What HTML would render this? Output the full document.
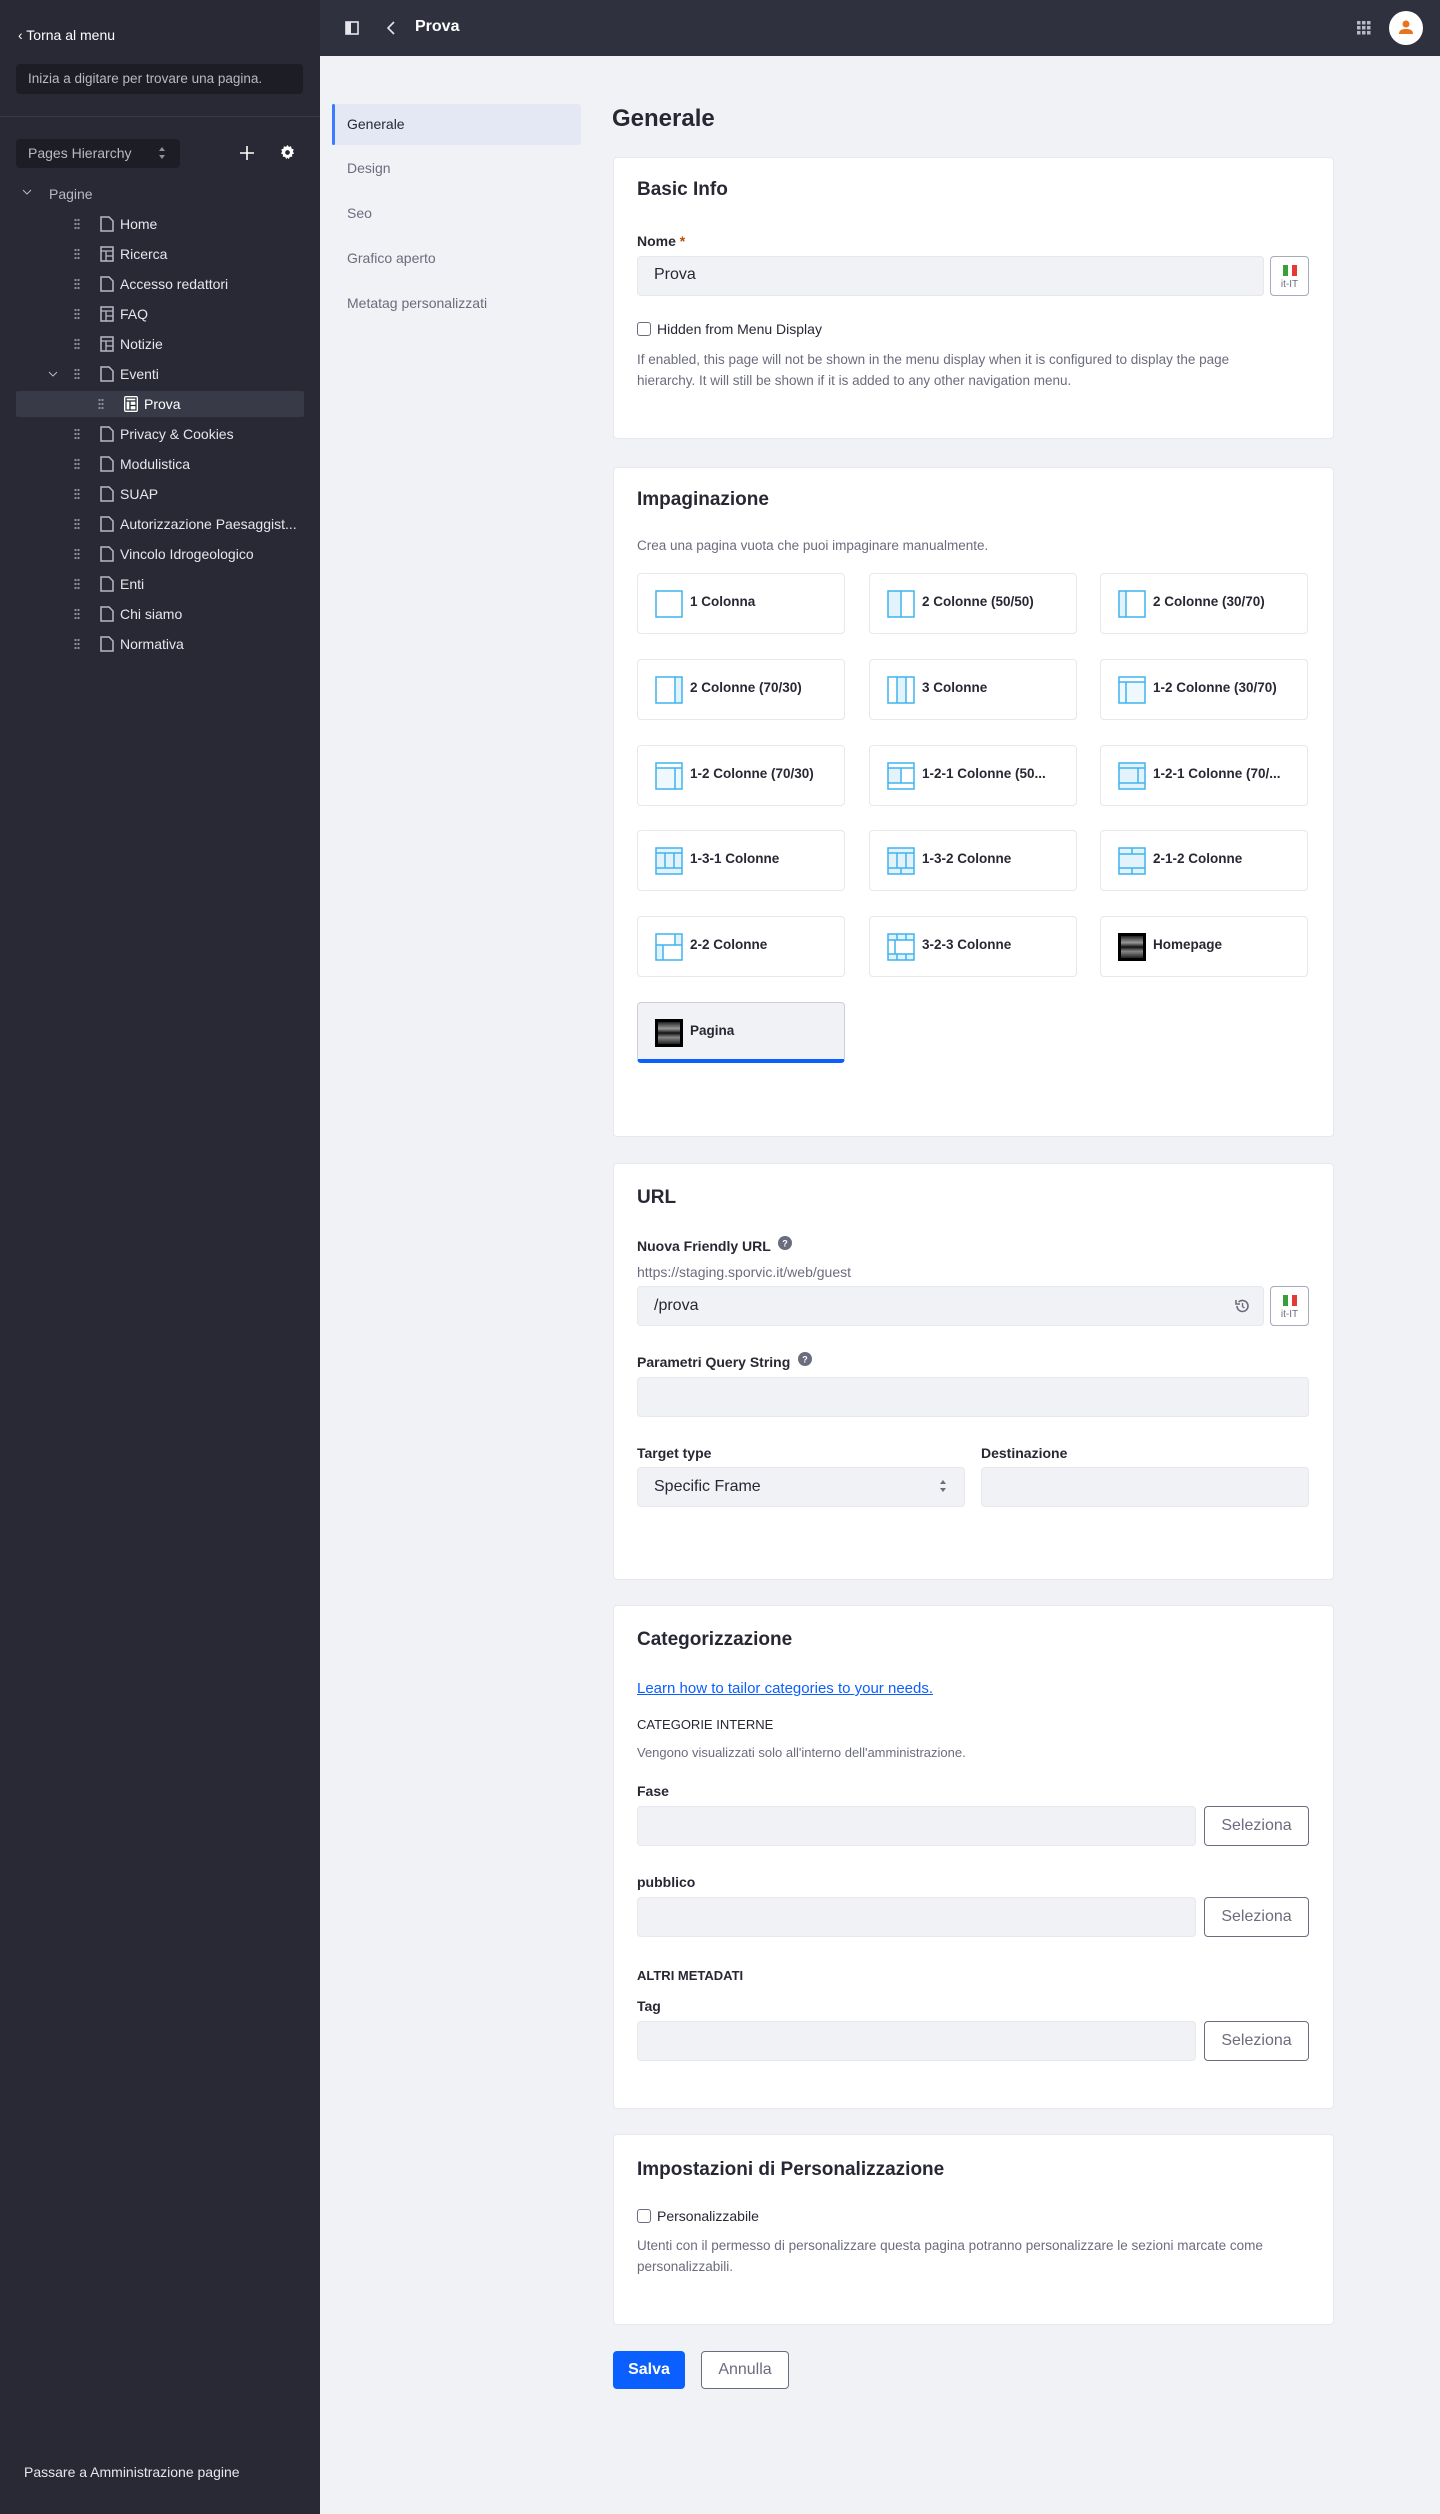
<!DOCTYPE html>
<html><head><meta charset="utf-8">
<style>
*{box-sizing:border-box;margin:0;padding:0}
body{width:1440px;height:2514px;position:relative;background:#f1f2f5;font-family:"Liberation Sans",sans-serif;font-size:14px;color:#272833;overflow:hidden}
.a{position:absolute}
.side{left:0;top:0;width:320px;height:2514px;background:#282934}
.top{left:320px;top:0;width:1120px;height:56px;background:#30313f}
.t{position:absolute;line-height:20px;white-space:nowrap}
.card{position:absolute;left:613px;width:721px;background:#fff;border:1px solid #e7e7ed;border-radius:4px}
.h{font-size:19px;font-weight:bold;color:#272833}
.lbl{font-weight:bold;font-size:14px;color:#272833}
.help{color:#6b6c7e;font-size:14px}
.inp{position:absolute;background:#f1f2f5;border:1px solid #e7e7ed;border-radius:4px;height:40px}
.flag{position:absolute;width:39px;height:40px;border:1px solid #a7a9bc;border-radius:4px;background:#fff;font-size:10px;color:#6b6c7e;text-align:center}
.tile{position:absolute;width:208px;height:61px;border:1px solid #e7e7ed;border-radius:4px;background:#fff}
.tile svg{position:absolute;left:17px;top:16px}
.tile span{position:absolute;left:52px;top:20px;font-weight:bold;font-size:13.5px;color:#272833;white-space:nowrap}
.btn2{position:absolute;width:105px;height:40px;border:1px solid #6b6c7e;border-radius:4px;background:#fff;color:#6b6c7e;font-size:16px;text-align:center;line-height:38px}
.nav{position:absolute;left:347px;color:#6b6c7e;font-size:14px;line-height:20px}
.cb{display:inline-block;width:14px;height:14px;border:1px solid #6b6c7e;border-radius:3px;vertical-align:-2px;margin-right:6px;background:#fff}
.it{position:absolute;height:20px}
.it .d{position:absolute;left:0;top:4px;width:6px;height:12px;background-image:radial-gradient(circle,#8e8f9e 1px,transparent 1.3px);background-size:3px 4px}
.it .ic{position:absolute;left:26px;top:2px}
.it .tx{position:absolute;left:46px;top:0;line-height:20px;color:#e6e6ec;white-space:nowrap;font-size:14px}
</style></head><body>
<div class="a side"></div>
<div class="t" style="left:18px;top:25px;color:#fff;font-size:14px">&#8249; Torna al menu</div>
<div class="a" style="left:16px;top:64px;width:287px;height:30px;background:#1c1d25;border-radius:4px"></div>
<div class="t" style="left:28px;top:69px;color:#b8b9c6;font-size:13.5px">Inizia a digitare per trovare una pagina.</div>
<div class="a" style="left:0;top:116px;width:320px;height:1px;background:#393a48"></div>
<div class="a" style="left:16px;top:139px;width:164px;height:29px;background:#1c1d25;border-radius:4px"></div>
<div class="t" style="left:28px;top:143px;color:#b8b9c6;font-size:14px">Pages Hierarchy</div>
<svg class="a" style="left:158px;top:146px" width="8" height="14"><path d="M4 1L7 5H1zM4 13L7 9H1z" fill="#8e8f9e"/></svg>
<svg class="a" style="left:240px;top:146px" width="14" height="14"><path d="M7 0v14M0 7h14" stroke="#fff" stroke-width="1.6"/></svg>
<svg class="a" style="left:280px;top:145px" width="15" height="15" viewBox="0 0 16 16"><path d="M8 0l1.5 2 2.4-.7.4 2.5 2.4 1-1 2.2L15 9l-2.2 1 .2 2.5-2.5.1L9.3 15 8 13.5 6.7 15l-1.2-2.4-2.5-.1.2-2.5L1 9l1.3-2-1-2.2 2.4-1 .4-2.5L6.5 2z" fill="#fff"/><circle cx="8" cy="8" r="2.5" fill="#282934"/></svg>
<svg class="a" style="left:22px;top:189px" width="10" height="8"><path d="M1 1l4 4 4-4" stroke="#b8b9c6" fill="none"/></svg>
<div class="t" style="left:49px;top:184px;color:#b8b9c6">Pagine</div>

<div class="a" style="left:16px;top:391px;width:288px;height:26px;background:#393a48;border-radius:2px"></div>
<svg class="a" style="left:48px;top:371px" width="10" height="8"><path d="M1 1l4 4 4-4" stroke="#b8b9c6" fill="none"/></svg>

<div class="a top"></div>
<svg class="a" style="left:345px;top:21px" width="14" height="14"><rect x="1" y="1" width="12" height="12" fill="none" stroke="#e6e6ec" stroke-width="1.6"/><rect x="1" y="1" width="5" height="12" fill="#e6e6ec"/></svg>
<svg class="a" style="left:387px;top:21px" width="8" height="14"><path d="M7 1L1 7l6 6" stroke="#e6e6ec" stroke-width="1.6" fill="none"/></svg>
<div class="t" style="left:415px;top:17px;color:#fff;font-size:16px;font-weight:bold">Prova</div>
<svg class="a" style="left:1357px;top:21px" width="14" height="14"><g fill="#b8b9c6"><rect x="0" y="0" width="3.5" height="3.5"/><rect x="5" y="0" width="3.5" height="3.5"/><rect x="10" y="0" width="3.5" height="3.5"/><rect x="0" y="5" width="3.5" height="3.5"/><rect x="5" y="5" width="3.5" height="3.5"/><rect x="10" y="5" width="3.5" height="3.5"/><rect x="0" y="10" width="3.5" height="3.5"/><rect x="5" y="10" width="3.5" height="3.5"/><rect x="10" y="10" width="3.5" height="3.5"/></g></svg>
<svg class="a" style="left:1389px;top:11px" width="34" height="34"><circle cx="17" cy="17" r="17" fill="#fff"/><circle cx="17" cy="13" r="3.5" fill="#e8731e"/><path d="M10 23c0-4 3-5 7-5s7 1 7 5z" fill="#e8731e"/></svg>

<div class="a" style="left:332px;top:104px;width:249px;height:41px;background:#e3e8f4;border-radius:3px"></div>
<div class="a" style="left:332px;top:104px;width:3px;height:41px;background:#3a7bff;border-radius:2px"></div>
<div class="nav" style="top:114px;color:#272833">Generale</div>
<div class="nav" style="top:158px">Design</div>
<div class="nav" style="top:203px">Seo</div>
<div class="nav" style="top:248px">Grafico aperto</div>
<div class="nav" style="top:293px">Metatag personalizzati</div>

<div class="t" style="left:612px;top:105px;font-size:24px;font-weight:bold;line-height:28px">Generale</div>

<div class="card" style="top:157px;height:282px"></div>
<div class="t h" style="left:637px;top:180px">Basic Info</div>
<div class="t lbl" style="left:637px;top:231px">Nome <span style="color:#b95000">*</span></div>
<div class="inp" style="left:637px;top:256px;width:627px"></div>
<div class="t" style="left:654px;top:265px;font-size:16px">Prova</div>
<div class="flag" style="left:1270px;top:256px"><svg style="margin-top:8px" width="14" height="11"><rect width="5" height="11" fill="#3a9e3a"/><rect x="5" width="4" height="11" fill="#fff"/><rect x="9" width="5" height="11" fill="#e53935"/></svg><div style="line-height:11px">it-IT</div></div>
<div class="t" style="left:637px;top:319px;font-size:14px"><span class="cb"></span>Hidden from Menu Display</div>
<div class="t help" style="left:637px;top:349px;line-height:21px;white-space:normal;width:650px;font-size:13.5px">If enabled, this page will not be shown in the menu display when it is configured to display the page hierarchy. It will still be shown if it is added to any other navigation menu.</div>

<div class="card" style="top:467px;height:670px"></div>
<div class="t h" style="left:637px;top:490px">Impaginazione</div>
<div class="t help" style="left:637px;top:536px;font-size:13.5px">Crea una pagina vuota che puoi impaginare manualmente.</div>

<div class="card" style="top:1163px;height:417px"></div>
<div class="t h" style="left:637px;top:1188px">URL</div>
<div class="t lbl" style="left:637px;top:1236px">Nuova Friendly URL <svg width="14" height="14" style="vertical-align:1px;margin-left:4px"><circle cx="7" cy="7" r="7" fill="#6b6c7e"/><text x="7" y="10.5" font-size="9" fill="#fff" text-anchor="middle" font-family="Liberation Sans">?</text></svg></div>
<div class="t help" style="left:637px;top:1262px">https://staging.sporvic.it/web/guest</div>
<div class="inp" style="left:637px;top:1286px;width:627px"></div>
<div class="t" style="left:654px;top:1296px;font-size:16px">/prova</div>
<svg class="a" style="left:1234px;top:1298px" width="16" height="16"><path d="M3 8a5.5 5.5 0 1 0 1.6-3.9" stroke="#6b6c7e" stroke-width="1.6" fill="none"/><path d="M2 2v4h4" stroke="#6b6c7e" stroke-width="1.6" fill="none"/><path d="M8.5 5v3.5l2 1.5" stroke="#6b6c7e" stroke-width="1.4" fill="none"/></svg>
<div class="flag" style="left:1270px;top:1286px"><svg style="margin-top:8px" width="14" height="11"><rect width="5" height="11" fill="#3a9e3a"/><rect x="5" width="4" height="11" fill="#fff"/><rect x="9" width="5" height="11" fill="#e53935"/></svg><div style="line-height:11px">it-IT</div></div>
<div class="t lbl" style="left:637px;top:1352px">Parametri Query String <svg width="14" height="14" style="vertical-align:1px;margin-left:4px"><circle cx="7" cy="7" r="7" fill="#6b6c7e"/><text x="7" y="10.5" font-size="9" fill="#fff" text-anchor="middle" font-family="Liberation Sans">?</text></svg></div>
<div class="inp" style="left:637px;top:1377px;width:672px"></div>
<div class="t lbl" style="left:637px;top:1443px">Target type</div>
<div class="t lbl" style="left:981px;top:1443px">Destinazione</div>
<div class="inp" style="left:637px;top:1467px;width:328px"></div>
<div class="t" style="left:654px;top:1477px;font-size:16px">Specific Frame</div>
<svg class="a" style="left:939px;top:1479px" width="8" height="14"><path d="M4 1L7 5H1zM4 13L7 9H1z" fill="#6b6c7e"/></svg>
<div class="inp" style="left:981px;top:1467px;width:328px"></div>

<div class="card" style="top:1605px;height:504px"></div>
<div class="t h" style="left:637px;top:1630px">Categorizzazione</div>
<div class="t" style="left:637px;top:1679px;color:#0b5fff;font-size:15px;text-decoration:underline">Learn how to tailor categories to your needs.</div>
<div class="t" style="left:637px;top:1715px;font-size:13px">CATEGORIE INTERNE</div>
<div class="t help" style="left:637px;top:1743px;font-size:13px">Vengono visualizzati solo all'interno dell'amministrazione.</div>
<div class="t lbl" style="left:637px;top:1781px">Fase</div>
<div class="inp" style="left:637px;top:1806px;width:559px"></div>
<div class="btn2" style="left:1204px;top:1806px">Seleziona</div>
<div class="t lbl" style="left:637px;top:1872px">pubblico</div>
<div class="inp" style="left:637px;top:1897px;width:559px"></div>
<div class="btn2" style="left:1204px;top:1897px">Seleziona</div>
<div class="t" style="left:637px;top:1966px;font-size:13px;font-weight:bold">ALTRI METADATI</div>
<div class="t lbl" style="left:637px;top:1996px">Tag</div>
<div class="inp" style="left:637px;top:2021px;width:559px"></div>
<div class="btn2" style="left:1204px;top:2021px">Seleziona</div>

<div class="card" style="top:2134px;height:191px"></div>
<div class="t h" style="left:637px;top:2160px">Impostazioni di Personalizzazione</div>
<div class="t" style="left:637px;top:2206px"><span class="cb"></span>Personalizzabile</div>
<div class="t help" style="left:637px;top:2235px;line-height:21px;white-space:normal;width:680px;font-size:13.5px">Utenti con il permesso di personalizzare questa pagina potranno personalizzare le sezioni marcate come personalizzabili.</div>

<div class="a" style="left:613px;top:2351px;width:72px;height:38px;background:#0b5fff;border-radius:4px;color:#fff;font-weight:bold;font-size:16px;text-align:center;line-height:38px">Salva</div>
<div class="a" style="left:701px;top:2351px;width:88px;height:38px;border:1px solid #6b6c7e;border-radius:4px;background:#fff;color:#6b6c7e;font-size:16px;text-align:center;line-height:36px">Annulla</div>

<div class="t" style="left:24px;top:2462px;color:#e6e6ec;font-size:14px">Passare a Amministrazione pagine</div>

<div class="it" style="left:74px;top:214px"><i class="d"></i><svg class="ic" width="14" height="16"><path d="M1 1h8l4 4v10H1z" fill="none" stroke="#b8b9c6" stroke-width="1.5"/></svg><span class="tx">Home</span></div>
<div class="it" style="left:74px;top:244px"><i class="d"></i><svg class="ic" width="14" height="16"><rect x="1" y="1" width="12" height="14" fill="none" stroke="#b8b9c6" stroke-width="1.5"/><path d="M1 5h12M6 5v10M6 10h7" stroke="#b8b9c6" stroke-width="1.3"/></svg><span class="tx">Ricerca</span></div>
<div class="it" style="left:74px;top:274px"><i class="d"></i><svg class="ic" width="14" height="16"><path d="M1 1h8l4 4v10H1z" fill="none" stroke="#b8b9c6" stroke-width="1.5"/></svg><span class="tx">Accesso redattori</span></div>
<div class="it" style="left:74px;top:304px"><i class="d"></i><svg class="ic" width="14" height="16"><rect x="1" y="1" width="12" height="14" fill="none" stroke="#b8b9c6" stroke-width="1.5"/><path d="M1 5h12M6 5v10M6 10h7" stroke="#b8b9c6" stroke-width="1.3"/></svg><span class="tx">FAQ</span></div>
<div class="it" style="left:74px;top:334px"><i class="d"></i><svg class="ic" width="14" height="16"><rect x="1" y="1" width="12" height="14" fill="none" stroke="#b8b9c6" stroke-width="1.5"/><path d="M1 5h12M6 5v10M6 10h7" stroke="#b8b9c6" stroke-width="1.3"/></svg><span class="tx">Notizie</span></div>
<div class="it" style="left:74px;top:364px"><i class="d"></i><svg class="ic" width="14" height="16"><path d="M1 1h8l4 4v10H1z" fill="none" stroke="#b8b9c6" stroke-width="1.5"/></svg><span class="tx">Eventi</span></div>
<div class="it" style="left:98px;top:394px"><i class="d"></i><svg class="ic" width="14" height="16"><rect x="0" y="0" width="14" height="16" rx="2" fill="#fff"/><path d="M2 5h10M6 5v9M6 9.5h6" stroke="#282934" stroke-width="1.3"/><rect x="2" y="2" width="10" height="12" fill="none" stroke="#282934" stroke-width="1.2"/></svg><span class="tx" style="color:#fff">Prova</span></div>
<div class="it" style="left:74px;top:424px"><i class="d"></i><svg class="ic" width="14" height="16"><path d="M1 1h8l4 4v10H1z" fill="none" stroke="#b8b9c6" stroke-width="1.5"/></svg><span class="tx">Privacy &amp; Cookies</span></div>
<div class="it" style="left:74px;top:454px"><i class="d"></i><svg class="ic" width="14" height="16"><path d="M1 1h8l4 4v10H1z" fill="none" stroke="#b8b9c6" stroke-width="1.5"/></svg><span class="tx">Modulistica</span></div>
<div class="it" style="left:74px;top:484px"><i class="d"></i><svg class="ic" width="14" height="16"><path d="M1 1h8l4 4v10H1z" fill="none" stroke="#b8b9c6" stroke-width="1.5"/></svg><span class="tx">SUAP</span></div>
<div class="it" style="left:74px;top:514px"><i class="d"></i><svg class="ic" width="14" height="16"><path d="M1 1h8l4 4v10H1z" fill="none" stroke="#b8b9c6" stroke-width="1.5"/></svg><span class="tx">Autorizzazione Paesaggist...</span></div>
<div class="it" style="left:74px;top:544px"><i class="d"></i><svg class="ic" width="14" height="16"><path d="M1 1h8l4 4v10H1z" fill="none" stroke="#b8b9c6" stroke-width="1.5"/></svg><span class="tx">Vincolo Idrogeologico</span></div>
<div class="it" style="left:74px;top:574px"><i class="d"></i><svg class="ic" width="14" height="16"><path d="M1 1h8l4 4v10H1z" fill="none" stroke="#b8b9c6" stroke-width="1.5"/></svg><span class="tx">Enti</span></div>
<div class="it" style="left:74px;top:604px"><i class="d"></i><svg class="ic" width="14" height="16"><path d="M1 1h8l4 4v10H1z" fill="none" stroke="#b8b9c6" stroke-width="1.5"/></svg><span class="tx">Chi siamo</span></div>
<div class="it" style="left:74px;top:634px"><i class="d"></i><svg class="ic" width="14" height="16"><path d="M1 1h8l4 4v10H1z" fill="none" stroke="#b8b9c6" stroke-width="1.5"/></svg><span class="tx">Normativa</span></div>

<div class="tile" style="left:637px;top:573px"><svg width="28" height="28"><rect x="1" y="1" width="26" height="26" fill="#fff" stroke="#3fb3ef" stroke-width="1.5"/></svg><span>1 Colonna</span></div>
<div class="tile" style="left:869px;top:573px"><svg width="28" height="28"><rect x="1" y="1" width="13" height="26" fill="#e3f3fc"/><rect x="1" y="1" width="26" height="26" fill="none" stroke="#3fb3ef" stroke-width="1.5"/><path d="M14 1v26" stroke="#3fb3ef" stroke-width="1.5"/></svg><span>2 Colonne (50/50)</span></div>
<div class="tile" style="left:1100px;top:573px"><svg width="28" height="28"><rect x="1" y="1" width="7" height="26" fill="#e3f3fc"/><rect x="1" y="1" width="26" height="26" fill="none" stroke="#3fb3ef" stroke-width="1.5"/><path d="M8 1v26" stroke="#3fb3ef" stroke-width="1.5"/></svg><span>2 Colonne (30/70)</span></div>

<div class="tile" style="left:637px;top:659px"><svg width="28" height="28"><rect x="20" y="1" width="7" height="26" fill="#e3f3fc"/><rect x="1" y="1" width="26" height="26" fill="none" stroke="#3fb3ef" stroke-width="1.5"/><path d="M20 1v26" stroke="#3fb3ef" stroke-width="1.5"/></svg><span>2 Colonne (70/30)</span></div>
<div class="tile" style="left:869px;top:659px"><svg width="28" height="28"><rect x="10" y="1" width="9" height="26" fill="#e3f3fc"/><rect x="1" y="1" width="26" height="26" fill="none" stroke="#3fb3ef" stroke-width="1.5"/><path d="M10 1v26M19 1v26" stroke="#3fb3ef" stroke-width="1.5"/></svg><span>3 Colonne</span></div>
<div class="tile" style="left:1100px;top:659px"><svg width="28" height="28"><rect x="1" y="6" width="26" height="21" fill="#eef8fd"/><rect x="1" y="1" width="26" height="26" fill="none" stroke="#3fb3ef" stroke-width="1.5"/><path d="M1 6h26M8 6v21" stroke="#3fb3ef" stroke-width="1.5"/></svg><span>1-2 Colonne (30/70)</span></div>

<div class="tile" style="left:637px;top:745px"><svg width="28" height="28"><rect x="1" y="6" width="26" height="21" fill="#eef8fd"/><rect x="1" y="1" width="26" height="26" fill="none" stroke="#3fb3ef" stroke-width="1.5"/><path d="M1 6h26M20 6v21" stroke="#3fb3ef" stroke-width="1.5"/></svg><span>1-2 Colonne (70/30)</span></div>
<div class="tile" style="left:869px;top:745px"><svg width="28" height="28"><rect x="1" y="6" width="13" height="15" fill="#e3f3fc"/><rect x="1" y="1" width="26" height="26" fill="none" stroke="#3fb3ef" stroke-width="1.5"/><path d="M1 6h26M1 21h26M14 6v15" stroke="#3fb3ef" stroke-width="1.5"/></svg><span>1-2-1 Colonne (50...</span></div>
<div class="tile" style="left:1100px;top:745px"><svg width="28" height="28"><rect x="1" y="1" width="26" height="26" fill="#e3f3fc"/><rect x="1" y="1" width="26" height="26" fill="none" stroke="#3fb3ef" stroke-width="1.5"/><path d="M1 6h26M1 21h26M20 6v15" stroke="#3fb3ef" stroke-width="1.5"/></svg><span>1-2-1 Colonne (70/...</span></div>

<div class="tile" style="left:637px;top:830px"><svg width="28" height="28"><rect x="1" y="1" width="26" height="26" fill="#e3f3fc"/><rect x="1" y="1" width="26" height="26" fill="none" stroke="#3fb3ef" stroke-width="1.5"/><path d="M1 6h26M1 21h26M10 6v15M19 6v15" stroke="#3fb3ef" stroke-width="1.5"/></svg><span>1-3-1 Colonne</span></div>
<div class="tile" style="left:869px;top:830px"><svg width="28" height="28"><rect x="1" y="1" width="26" height="26" fill="#e3f3fc"/><rect x="1" y="1" width="26" height="26" fill="none" stroke="#3fb3ef" stroke-width="1.5"/><path d="M1 6h26M1 21h26M10 6v15M19 6v15M14 21v6" stroke="#3fb3ef" stroke-width="1.5"/></svg><span>1-3-2 Colonne</span></div>
<div class="tile" style="left:1100px;top:830px"><svg width="28" height="28"><rect x="1" y="1" width="26" height="26" fill="#e3f3fc"/><rect x="1" y="1" width="26" height="26" fill="none" stroke="#3fb3ef" stroke-width="1.5"/><path d="M1 7h26M1 21h26M14 1v6M14 21v6" stroke="#3fb3ef" stroke-width="1.5"/></svg><span>2-1-2 Colonne</span></div>

<div class="tile" style="left:637px;top:916px"><svg width="28" height="28"><rect x="1" y="12" width="7" height="15" fill="#e3f3fc"/><rect x="20" y="1" width="7" height="11" fill="#e3f3fc"/><rect x="1" y="1" width="26" height="26" fill="none" stroke="#3fb3ef" stroke-width="1.5"/><path d="M1 12h26M20 1v11M8 12v15" stroke="#3fb3ef" stroke-width="1.5"/></svg><span>2-2 Colonne</span></div>
<div class="tile" style="left:869px;top:916px"><svg width="28" height="28"><rect x="1" y="1" width="26" height="26" fill="#e3f3fc"/><rect x="1" y="7" width="26" height="14" fill="#fff"/><rect x="1" y="1" width="26" height="26" fill="none" stroke="#3fb3ef" stroke-width="1.5"/><path d="M1 7h26M1 21h26M10 1v6M19 1v6M10 21v6M19 21v6M8 7v14" stroke="#3fb3ef" stroke-width="1.5"/></svg><span>3-2-3 Colonne</span></div>
<div class="tile" style="left:1100px;top:916px"><svg width="28" height="28"><defs><linearGradient id="g" x1="0" y1="0" x2="0" y2="1"><stop offset="0" stop-color="#222"/><stop offset=".3" stop-color="#999"/><stop offset=".5" stop-color="#111"/><stop offset=".7" stop-color="#888"/><stop offset="1" stop-color="#222"/></linearGradient></defs><rect width="28" height="28" fill="#000"/><rect x="3" y="3" width="22" height="22" fill="url(#g)"/></svg><span>Homepage</span></div>

<div class="tile" style="left:637px;top:1002px;background:#f1f2f5;border-color:#cdced9;border-bottom:4px solid #0b5fff"><svg width="28" height="28"><rect width="28" height="28" fill="#000"/><rect x="3" y="3" width="22" height="22" fill="url(#g)"/></svg><span>Pagina</span></div>
</body></html>
